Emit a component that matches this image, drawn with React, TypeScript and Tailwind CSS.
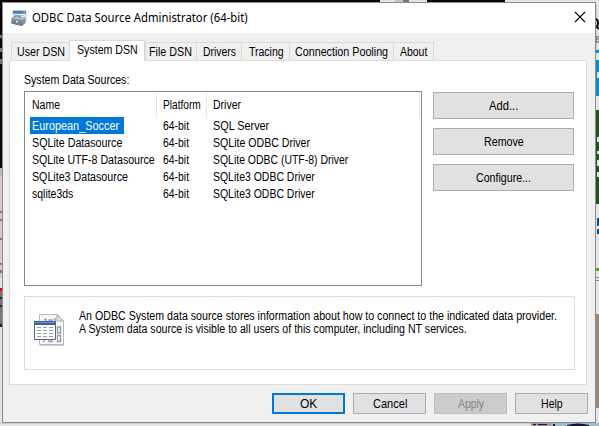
import React, { useLayoutEffect, useRef, useState } from "react";

// Condenses a line of text horizontally so that it fills a given width.
function T({ w, children }: { w: number; children: string }) {
  const ref = useRef<HTMLSpanElement>(null);
  const [scale, setScale] = useState(1);
  useLayoutEffect(() => {
    if (ref.current) setScale(w / ref.current.offsetWidth);
  }, [w, children]);
  return (
    <span className="inline-flex justify-start align-top" style={{ width: w }}>
      <span ref={ref} className="inline-block shrink-0 origin-left" style={{ transform: `scaleX(${scale})` }}>
        {children}
      </span>
    </span>
  );
}

const tabs = [
  { label: "User DSN", w: 48, box: "w-[58px] pl-[5px]", active: false },
  { label: "System DSN", w: 61, box: "w-[76px] pl-[7px]", active: true },
  { label: "File DSN", w: 43, box: "w-[51px] pl-[3px]", active: false },
  { label: "Drivers", w: 33, box: "w-[45px] pl-[6px]", active: false },
  { label: "Tracing", w: 35, box: "w-[48px] pl-[7px]", active: false },
  { label: "Connection Pooling", w: 93, box: "w-[104px] pl-[5px]", active: false },
  { label: "About", w: 27, box: "w-[41px] pl-[6px]", active: false },
];

const rows = [
  { name: "European_Soccer", nw: 87, driver: "SQL Server", dw: 56 },
  { name: "SQLite Datasource", nw: 90, driver: "SQLite ODBC Driver", dw: 97 },
  { name: "SQLite UTF-8 Datasource", nw: 123, driver: "SQLite ODBC (UTF-8) Driver", dw: 135 },
  { name: "SQLite3 Datasource", nw: 96, driver: "SQLite3 ODBC Driver", dw: 102 },
  { name: "sqlite3ds", nw: 41, driver: "SQLite3 ODBC Driver", dw: 102 },
];

function AppIcon() {
  return (
    <svg width="17" height="17" viewBox="0 0 17 17" className="shrink-0">
      <path d="M2 1h13v11H2z" fill="#e4e9ef" stroke="#a9b5c2" strokeWidth=".6" />
      <path d="M2 0.7h13v3H2z" fill="#4c78b8" />
      <path d="M12.5 1.5h1.5v1h-1.5z" fill="#dce8f7" />
      <path d="M4 5.5h9M4 7.5h9" stroke="#b4bdc8" strokeWidth=".8" />
      <path d="M0.5 8 3 6.3l11.5 1v5.8L11 16 .5 13.5z" fill="#83939f" />
      <path d="M.5 8 3 6.3l11.5 1L11.3 10z" fill="#b3c1ca" />
      <path d="M.5 10.2l10.7 1.7v4L.5 13.5z" fill="#6b7d8b" />
      <path d="M4 7.4V5.8l5 .3v1.8" fill="none" stroke="#667684" />
      <path d="M5 10.8h2v2H5z" fill="#d2dbe1" />
    </svg>
  );
}

function DataSourceIcon() {
  return (
    <svg width="32" height="34" viewBox="0 0 32 34" className="shrink-0">
      <path d="M6 1.5h18l6 6V32H6z" fill="#cfcfcf" />
      <path d="M5.5.5H23l6.500 6.500V30.500H5.500z" fill="#f7f7f7" stroke="#b9b9b9" />
      <path d="M23 .5V7h6.500z" fill="#e2e2e2" stroke="#a9a9a9" />
      <g fill="none" stroke="#9a97ab" strokeWidth="1.300">
        <path d="M10 6l2-1v3M15 8V6h3v2M20 6l1-1v3" />
        <path d="M23.500 13h3v6h-3zM23.500 21.500h3v6h-3zM10 26v2M15 26v1.500h3V26" />
      </g>
      <path d="M.5 7.500h21v18H.5z" fill="#fdfdfd" stroke="#5d6880" />
      <path d="M0 7h22v4H0z" fill="#3e62a5" />
      <path d="M1 8h20v1H1z" fill="#6f91cd" />
      <path d="M3 13.500h17M3 16.500h17M3 19.500h17M3 22.500h17" stroke="#9c9fa3" strokeDasharray="4 2" />
    </svg>
  );
}

function SideButton({ w, children }: { w: number; children: string }) {
  return (
    <button className="flex h-[27px] w-[141px] items-center justify-center border border-[#adadad] bg-[#e1e1e1] pt-px">
      <T w={w}>{children}</T>
    </button>
  );
}

function Desktop() {
  return (
    <svg className="absolute inset-0" width="599" height="426" viewBox="0 0 599 426">
      <path fill="#e5e5e5" d="M0 0h599v426H0z" />
      <path fill="#0a0708" d="M0 0h380v3H0zM427 0h78v2h-78zM0 0h3v168H0z" />
      <path fill="#adcbe0" d="M395 0h9v2h-9z" />
      <path fill="#777" d="M403 0h6v2h-6zM0 35h2v3H0zM0 48h2v4H0zM0 59h2v5H0z" />
      <path fill="#b9b8cb" d="M0 168h2v8H0z" />
      <path fill="#dec9c6" d="M0 176h2v102H0z" />
      <path fill="#85777a" d="M0 211h2v2H0zM0 219h2v2H0zM0 238h2v2H0zM0 263h2v2H0zM0 270h2v3H0z" />
      <path fill="#f00000" d="M0 288h2v3H0z" />
      <path fill="#777" d="M0 291h2v36H0z" />
      <path fill="#222" d="M0 297h2v2H0zM0 305h2v2H0zM0 324h2v3H0z" />
      <path fill="#128bc5" d="M596 50h3v3h-3zM596 60h3v36h-3z" />
      <path fill="#245022" d="M596 110h3v94h-3z" />
      <path fill="#164c7c" d="M597 218h2v8h-2zM597 229h2v5h-2z" />
      <path fill="#58a42e" d="M596 268h3v3h-3z" />
      <path fill="#888" d="M596 277h3v1h-3zM596 280h3v1h-3z" />
      <path fill="#97877c" d="M596 314h3v94h-3z" />
      <path fill="#cbcbcb" d="M0 423h599v1H0zM596 5h1v45h-1z" />
      <path fill="#a99999" d="M531 423h20v3h-20z" />
      <path fill="#9ebcc5" d="M551 423h48v3h-48z" />
      <path fill="#14143a" d="M533 424h3v1h-3zM538 424h9v1h-9zM553 424h2v2h-2zM567 425q11-3 22 0v1h-22z" />
      <path fill="none" stroke="#111" strokeWidth="2" d="M595 19q3 0 3 4t-3 4m1-1 3 3" />
      <path fill="none" stroke="#555" d="M596 39h3m0-2q-2-1-3 0v5h3" />
      <path fill="#dce8dc" d="M597 72h2v6h-2zM597 137h2v5h-2zM597 151h2v3h-2zM597 160h2v6h-2zM597 172h2v5h-2z" />
    </svg>
  );
}

export default function App() {
  return (
    <div className="relative h-[426px] w-[599px] overflow-hidden font-['Liberation_Sans',sans-serif] text-[12px] leading-[14px] text-black">
      <Desktop />
      <main className="absolute left-[2px] top-[2px] flex h-[421px] w-[594px] flex-col border border-[#8c8c8c] bg-[#f0f0f0] whitespace-nowrap">
        <header className="flex h-[30px] shrink-0 items-center justify-between bg-white pl-[8px] pr-[9px]">
          <div className="flex items-center gap-[4px]">
            <AppIcon />
            <h1 className="font-['Noto_Sans','Liberation_Sans',sans-serif]">
              <T w={216}>ODBC Data Source Administrator (64-bit)</T>
            </h1>
          </div>
          <svg width="12" height="12" viewBox="0 0 12 12" className="mb-[2px]">
            <path d="M1 1l10 10M11 1L1 11" stroke="black" strokeWidth="1.100" />
          </svg>
        </header>

        <nav className="ml-[8px] mt-[7px] flex h-[20px] shrink-0 items-end">
          {tabs.map((t) => (
            <div
              key={t.label}
              className={
                t.active
                  ? `${t.box} relative z-10 -mb-px h-[21px] border border-b-0 border-[#d9d9d9] bg-white pt-[2px]`
                  : `${t.box} h-[18px] border border-b-0 border-r-0 border-[#d9d9d9] pt-[2px] last:border-r`
              }
            >
              <T w={t.w}>{t.label}</T>
            </div>
          ))}
        </nav>

        <section className="ml-[6px] h-[325px] w-[578px] shrink-0 border border-[#dcdcdc] bg-white pl-[14px] pt-[12px]">
          <p className="h-[18px]">
            <T w={105}>System Data Sources:</T>
          </p>
          <div className="flex gap-[11px]">
            <div className="h-[195px] w-[398px] border border-[#828790] pt-px">
              <div className="flex h-[24px] items-center">
                <span className="flex h-full w-[132px] items-center border-r border-[#e5e5e5] pl-[7px]">
                  <T w={28}>Name</T>
                </span>
                <span className="flex h-full w-[50px] items-center border-r border-[#e5e5e5] pl-[6px]">
                  <T w={38}>Platform</T>
                </span>
                <span className="flex h-full w-[213px] items-center border-r border-[#e5e5e5] pl-[6px]">
                  <T w={28}>Driver</T>
                </span>
              </div>
              {rows.map((r, i) => (
                <div key={r.name} className="flex h-[17px] leading-[19px]">
                  <div className="w-[132px] pl-[5px]">
                    <div className={i === 0 ? "h-[17px] w-[94px] bg-[#0078d7] pl-[2px] text-white" : "pl-[2px]"}>
                      <T w={r.nw}>{r.name}</T>
                    </div>
                  </div>
                  <div className="w-[50px] pl-[6px]">
                    <T w={26}>64-bit</T>
                  </div>
                  <div className="pl-[6px]">
                    <T w={r.dw}>{r.driver}</T>
                  </div>
                </div>
              ))}
            </div>
            <div className="flex flex-col gap-[9px] pt-px">
              <SideButton w={29}>Add...</SideButton>
              <SideButton w={40}>Remove</SideButton>
              <SideButton w={55}>Configure...</SideButton>
            </div>
          </div>
          <div className="mt-[10px] flex h-[74px] w-[551px] border border-[#dcdcdc] pl-[9px] pt-[17px]">
            <DataSourceIcon />
            <div className="-mt-[4px] ml-[13px] flex flex-col leading-[13px]">
              <T w={478}>
                An ODBC System data source stores information about how to connect to the indicated data provider.
              </T>
              <T w={388}>A System data source is visible to all users of this computer, including NT services.</T>
            </div>
          </div>
        </section>

        <footer className="mr-[7px] mt-[8px] flex justify-end gap-[8px]">
          <button className="flex h-[21px] w-[73px] items-center justify-center border-2 border-[#0078d7] bg-[#e1e1e1]">
            <T w={17}>OK</T>
          </button>
          <button className="flex h-[21px] w-[73px] items-center justify-center border border-[#adadad] bg-[#e1e1e1]">
            <T w={34}>Cancel</T>
          </button>
          <button
            disabled
            className="flex h-[21px] w-[73px] items-center justify-center border border-[#bfbfbf] bg-[#cccccc] text-[#838383]"
          >
            <T w={26}>Apply</T>
          </button>
          <button className="flex h-[21px] w-[73px] items-center justify-center border border-[#adadad] bg-[#e1e1e1]">
            <T w={22}>Help</T>
          </button>
        </footer>
      </main>
    </div>
  );
}
